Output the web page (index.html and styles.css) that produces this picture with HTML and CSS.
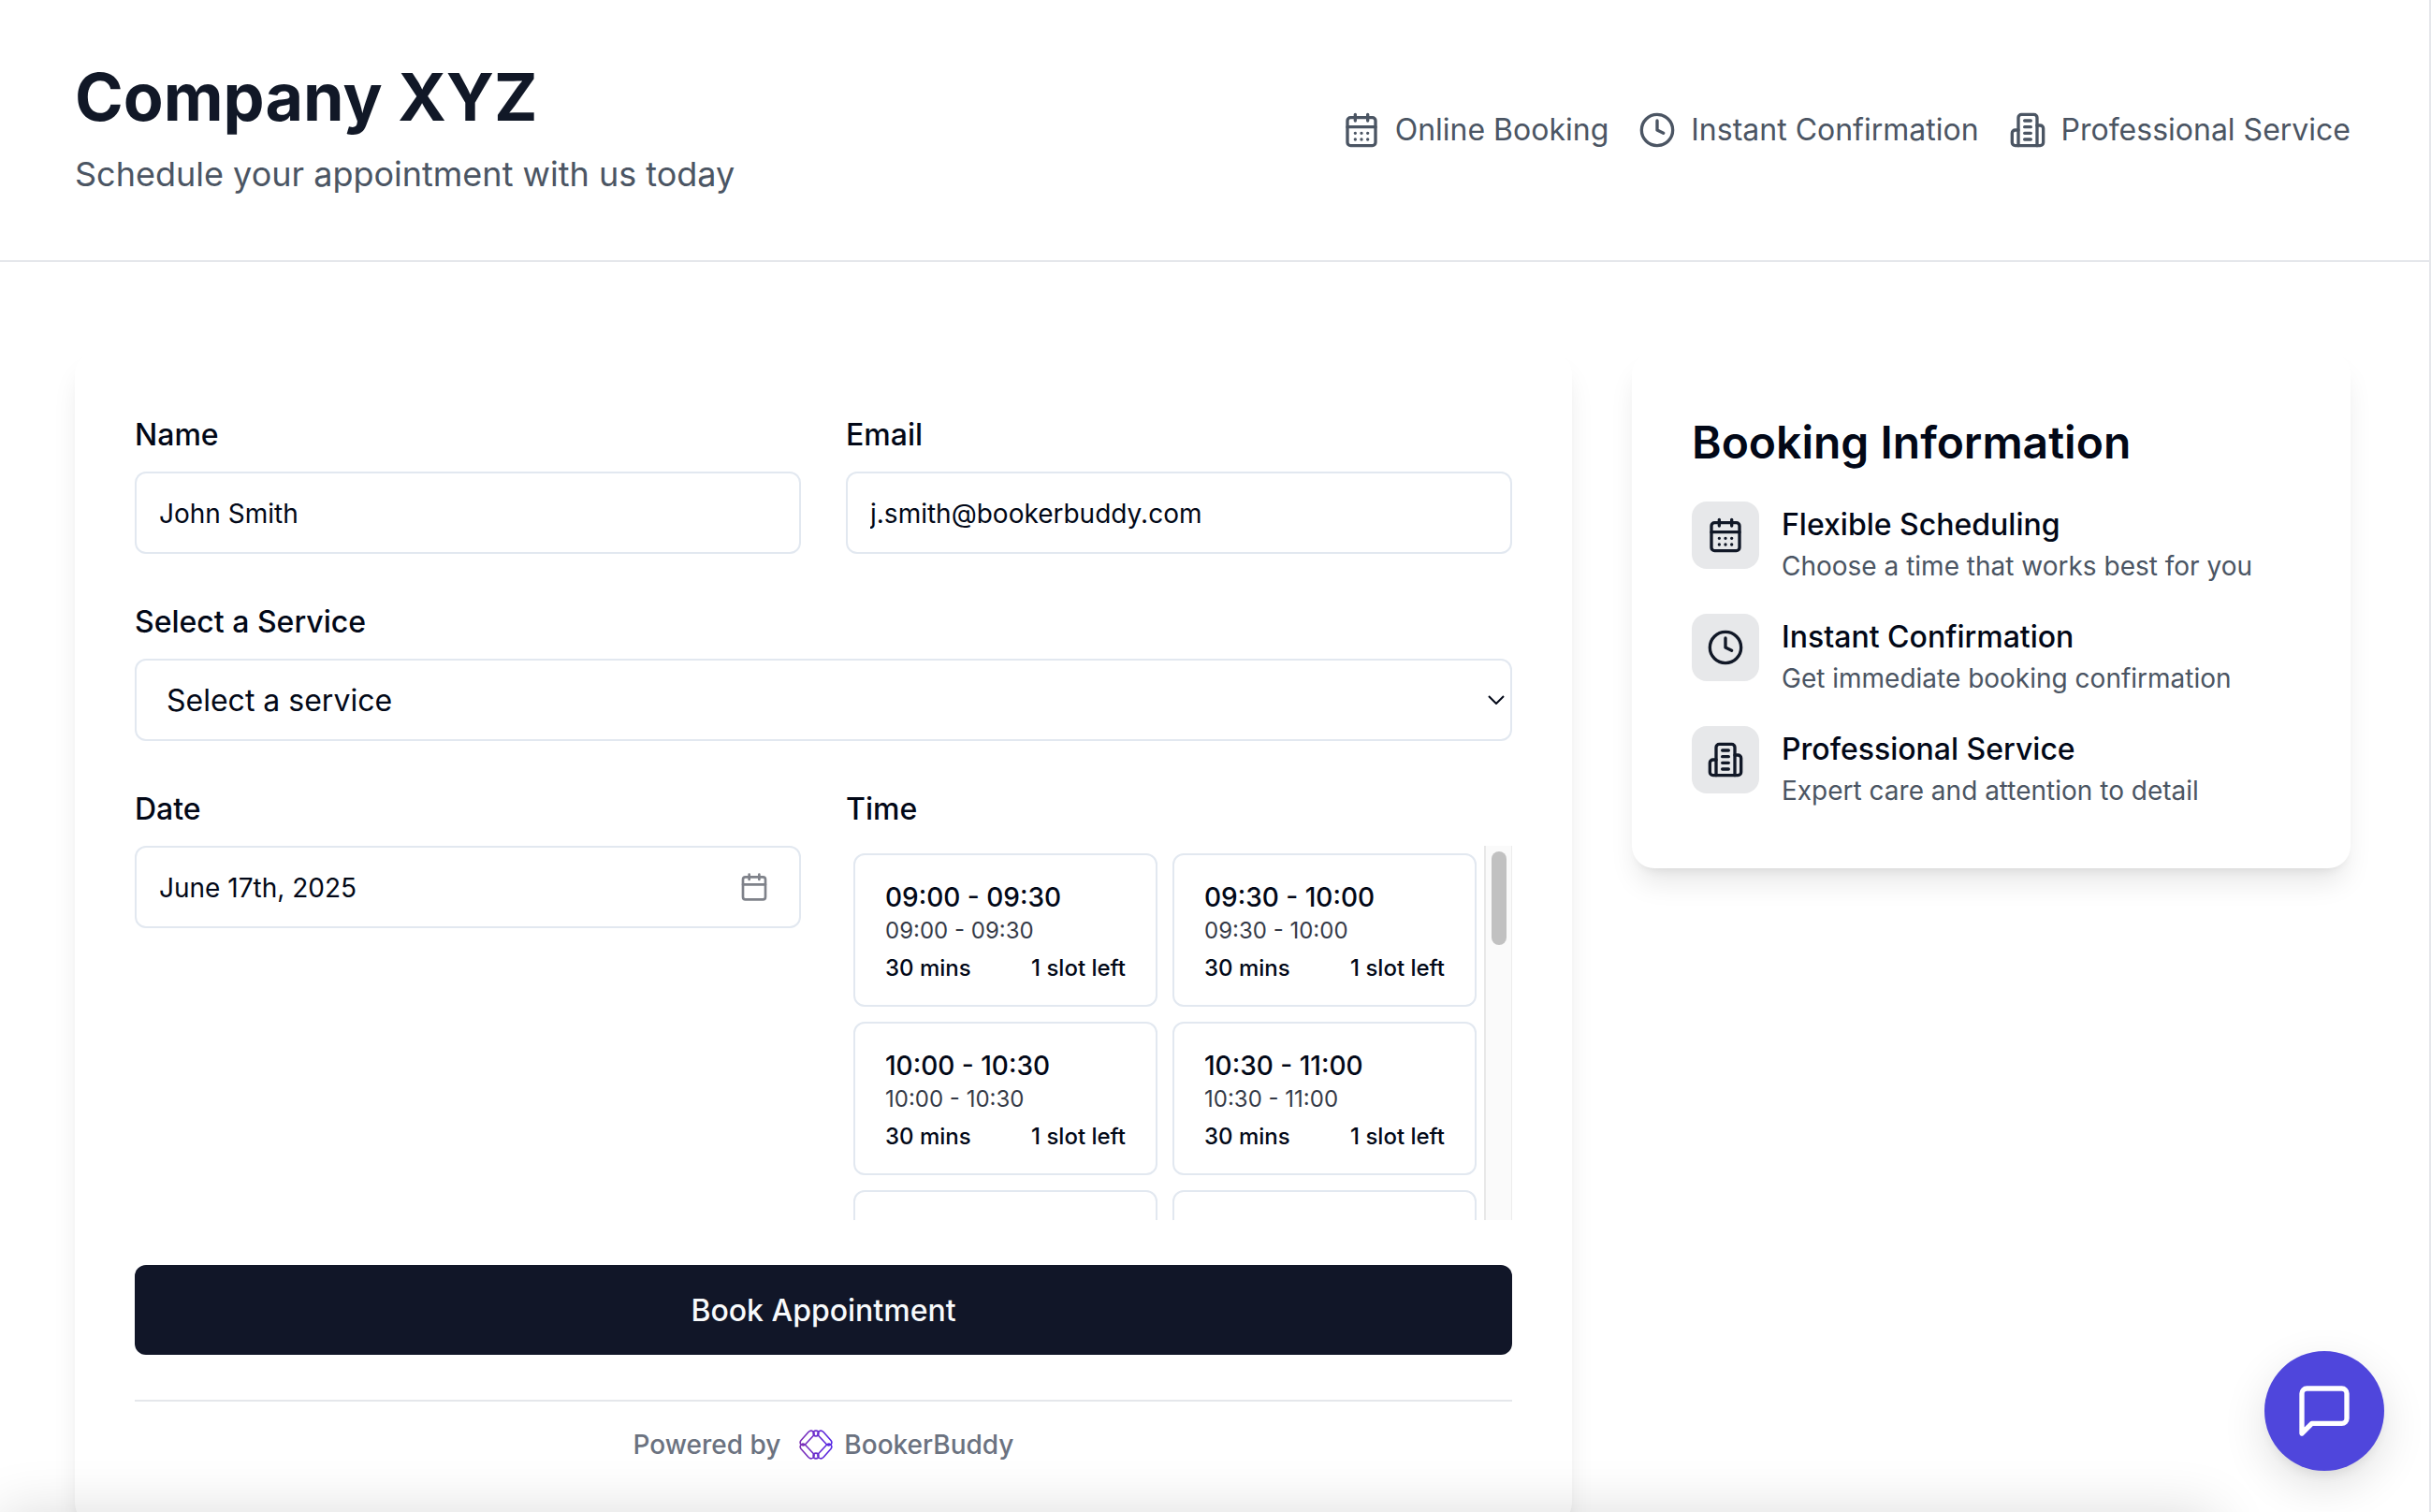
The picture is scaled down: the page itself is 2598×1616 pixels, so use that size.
FILE: index.html
```html
<!DOCTYPE html>
<html lang="en">
<head>
<meta charset="utf-8">
<meta name="viewport" content="width=device-width, initial-scale=1">
<title>Company XYZ</title>
<link rel="stylesheet" href="styles.css">
</head>
<body>
<svg class="sprite" aria-hidden="true">
  <symbol id="calendar-days" viewBox="0 0 24 24"><path d="M8 2v4M16 2v4M3 10h18M8 14h.01M12 14h.01M16 14h.01M8 18h.01M12 18h.01M16 18h.01"/><rect x="3" y="4" width="18" height="18" rx="2"/></symbol>
  <symbol id="calendar" viewBox="0 0 24 24"><path d="M8 2v4M16 2v4M3 10h18"/><rect x="3" y="4" width="18" height="18" rx="2"/></symbol>
  <symbol id="clock" viewBox="0 0 24 24"><circle cx="12" cy="12" r="10"/><path d="M12 6v6l4 2"/></symbol>
  <symbol id="building" viewBox="0 0 24 24"><path d="M6 22V4a2 2 0 0 1 2-2h8a2 2 0 0 1 2 2v18Z"/><path d="M6 12H4a2 2 0 0 0-2 2v6a2 2 0 0 0 2 2h2M18 9h2a2 2 0 0 1 2 2v9a2 2 0 0 1-2 2h-2M10 6h4M10 10h4M10 14h4M10 18h4"/></symbol>
</svg>
<div class="page">
  <header class="header">
    <div>
      <h1 class="title">Company XYZ</h1>
      <p class="tagline">Schedule your appointment with us today</p>
    </div>
    <ul class="features">
      <li class="feature"><svg class="icon"><use href="#calendar-days"/></svg>Online Booking</li>
      <li class="feature"><svg class="icon"><use href="#clock"/></svg>Instant Confirmation</li>
      <li class="feature"><svg class="icon"><use href="#building"/></svg>Professional Service</li>
    </ul>
  </header>

  <main class="main">
    <section class="card booking">
      <form class="form">
        <div class="row">
          <div class="field">
            <label class="label" for="name">Name</label>
            <input class="control" id="name" type="text" value="John Smith">
          </div>
          <div class="field">
            <label class="label" for="email">Email</label>
            <input class="control" id="email" type="email" value="j.smith@bookerbuddy.com">
          </div>
        </div>
        <div class="field">
          <label class="label" for="service">Select a Service</label>
          <div class="control-wrap">
            <select class="control select" id="service"><option>Select a service</option></select>
            <svg class="chevron" viewBox="0 0 18 10" aria-hidden="true"><path d="M1 1l8 8 8-8"/></svg>
          </div>
        </div>
        <div class="row">
          <div class="field">
            <label class="label" for="date">Date</label>
            <div class="control-wrap">
              <input class="control" id="date" type="text" value="June 17th, 2025">
              <svg class="icon date-icon" aria-hidden="true"><use href="#calendar"/></svg>
            </div>
          </div>
          <div class="field">
            <span class="label" id="time-label">Time</span>
            <div class="slots" role="group" aria-labelledby="time-label">
              <div class="slot-grid">
                <button class="slot" type="button"><span class="slot-title">09:00 - 09:30</span><span class="slot-range">09:00 - 09:30</span><span class="slot-meta"><span>30 mins</span><span>1 slot left</span></span></button>
                <button class="slot" type="button"><span class="slot-title">09:30 - 10:00</span><span class="slot-range">09:30 - 10:00</span><span class="slot-meta"><span>30 mins</span><span>1 slot left</span></span></button>
                <button class="slot" type="button"><span class="slot-title">10:00 - 10:30</span><span class="slot-range">10:00 - 10:30</span><span class="slot-meta"><span>30 mins</span><span>1 slot left</span></span></button>
                <button class="slot" type="button"><span class="slot-title">10:30 - 11:00</span><span class="slot-range">10:30 - 11:00</span><span class="slot-meta"><span>30 mins</span><span>1 slot left</span></span></button>
                <button class="slot" type="button"></button>
                <button class="slot" type="button"></button>
              </div>
              <div class="scrollbar"><div class="thumb"></div></div>
            </div>
          </div>
        </div>
        <button class="submit" type="submit">Book Appointment</button>
      </form>
      <footer class="powered">
        <span>Powered by</span>
        <a class="brand" href="#">
          <svg class="logo" viewBox="0 0 36 32" aria-hidden="true">
            <defs><linearGradient id="brand-fill" gradientUnits="userSpaceOnUse" x1="0" y1="0" x2="36" y2="0"><stop offset="0" stop-color="#7e2fb4"/><stop offset="1" stop-color="#5528e6"/></linearGradient></defs>
            <g fill="none" stroke="url(#brand-fill)" stroke-width="1.6" stroke-linejoin="round">
              <path d="M2 11.500L10 2.500Q12.500 0 15 2Q17.200 4.400 15 6.800L6.800 15.500Q4.500 18 2.200 16Q.2 13.800 2 11.500Z"/>
              <path d="M34 11.500L26 2.500Q23.500 0 21 2Q18.800 4.400 21 6.800L29.200 15.500Q31.500 18 33.800 16Q35.800 13.800 34 11.500Z"/>
              <path d="M2 20.500L10 29.500Q12.500 32 15 30Q17.200 27.600 15 25.200L6.800 16.500Q4.500 14 2.200 16Q.2 18.200 2 20.500Z"/>
              <path d="M34 20.500L26 29.500Q23.500 32 21 30Q18.800 27.600 21 25.200L29.200 16.500Q31.500 14 33.800 16Q35.800 18.200 34 20.500Z"/>
              <circle cx="18" cy="4" r="2.900"/>
              <circle cx="18" cy="28" r="2.900"/>
            </g>
          </svg>
          BookerBuddy
        </a>
      </footer>
    </section>

    <aside class="card info">
      <h2 class="info-title">Booking Information</h2>
      <ul class="info-list">
        <li class="info-item"><span class="badge"><svg class="icon"><use href="#calendar-days"/></svg></span><div class="info-text"><h3 class="info-name">Flexible Scheduling</h3><p class="info-desc">Choose a time that works best for you</p></div></li>
        <li class="info-item"><span class="badge"><svg class="icon"><use href="#clock"/></svg></span><div class="info-text"><h3 class="info-name">Instant Confirmation</h3><p class="info-desc">Get immediate booking confirmation</p></div></li>
        <li class="info-item"><span class="badge"><svg class="icon"><use href="#building"/></svg></span><div class="info-text"><h3 class="info-name">Professional Service</h3><p class="info-desc">Expert care and attention to detail</p></div></li>
      </ul>
    </aside>
  </main>
</div>
<div class="bottom-shade"></div>
<button class="chat" type="button" aria-label="Open chat"><svg class="icon chat-icon" viewBox="0 0 24 24"><path d="M21 15a2 2 0 0 1-2 2H7l-4 4V5a2 2 0 0 1 2-2h14a2 2 0 0 1 2 2z"/></svg></button>
</body>
</html>
```
FILE: styles.css
```css
*, *::before, *::after { box-sizing: border-box; }

body {
  margin: 0;
  height: 100vh;
  overflow: hidden;
  background: #fff;
  color: #020817;
  font-family: Inter, "Liberation Sans", sans-serif;
  font-size: 32px;
  line-height: 48px;
}

h1, h2, h3, p, ul { margin: 0; padding: 0; }
ul { list-style: none; }
button, input, select { font: inherit; color: inherit; }

.sprite { display: none; }

.icon {
  width: 40px;
  height: 40px;
  flex: none;
  fill: none;
  stroke: currentColor;
  stroke-width: 2;
  stroke-linecap: round;
  stroke-linejoin: round;
}

.page {
  min-height: 100vh;
  border-right: 2px solid #e5e7eb;
}

/* Header */
.header {
  display: flex;
  align-items: center;
  justify-content: space-between;
  padding: 64px 84px 64px 80px;
  border-bottom: 2px solid #e5e7eb;
}

.title {
  color: #111827;
  font-size: 70px;
  font-weight: 700;
  line-height: 80px;
}

.tagline {
  margin-top: 14px;
  color: #4b5563;
  font-size: 36px;
  line-height: 56px;
}

.features { display: flex; gap: 32px; color: #4b5563; }
.feature { display: flex; align-items: center; gap: 16px; }

/* Content */
.main {
  display: grid;
  grid-template-columns: repeat(3, minmax(0, 1fr));
  gap: 64px;
  align-items: start;
  padding: 96px 84px 96px 80px;
}

.card {
  padding: 64px;
  border-radius: 24px;
  background: #fff;
  box-shadow: 0 20px 30px -6px rgba(0, 0, 0, .1), 0 8px 12px -8px rgba(0, 0, 0, .1);
}

.booking { grid-column: span 2; }
.form { display: flex; flex-direction: column; gap: 48px; }
.row { display: grid; grid-template-columns: repeat(2, minmax(0, 1fr)); gap: 48px; }
.field { display: flex; flex-direction: column; gap: 14px; }
.label { font-weight: 500; line-height: 50px; }

.control {
  display: block;
  width: 100%;
  height: 88px;
  padding: 2px 24px 0;
  border: 2px solid #e2e8f0;
  border-radius: 12px;
  background: #fff;
  font-size: 28px;
}

.control-wrap { position: relative; }
.select { padding: 2px 32px 0; font-size: 32px; appearance: none; }

.chevron {
  position: absolute;
  top: 39px;
  right: 8px;
  width: 18px;
  height: 10px;
  fill: none;
  stroke: #020817;
  stroke-width: 2;
  pointer-events: none;
}

.date-icon {
  position: absolute;
  top: 28px;
  right: 34px;
  width: 32px;
  height: 32px;
  opacity: .5;
  pointer-events: none;
}

/* Time slots */
.slots { display: flex; height: 400px; overflow: hidden; }

.slot-grid {
  flex: 1;
  display: grid;
  grid-template-columns: repeat(2, minmax(0, 1fr));
  grid-auto-rows: 164px;
  gap: 16px;
  padding: 8px;
}

.slot {
  display: flex;
  flex-direction: column;
  padding: 25px 32px 23px;
  border: 2px solid #e2e8f0;
  border-radius: 12px;
  background: #fff;
  text-align: left;
  font-size: 24px;
  line-height: 32px;
}

.slot-title { font-size: 28px; font-weight: 500; line-height: 40px; }
.slot-range { opacity: .8; }
.slot-meta { display: flex; justify-content: space-between; margin-top: 8px; font-weight: 500; }

.scrollbar {
  width: 30px;
  padding: 6px;
  border-left: 2px solid #e8e8e8;
  border-right: 1px solid #ededed;
  background: #fafafa;
}

.thumb { width: 16px; height: 100px; border-radius: 8px; background: #c1c1c1; }

.submit {
  height: 96px;
  padding: 2px 0 0;
  border: 0;
  border-radius: 12px;
  background: #111628;
  color: #f8fafc;
  font-weight: 500;
}

.powered {
  display: flex;
  justify-content: center;
  gap: 20px;
  margin-top: 48px;
  padding-top: 24px;
  border-top: 2px solid #e5e7eb;
  color: #6b7280;
  font-size: 28px;
  font-weight: 500;
  line-height: 44px;
}

.brand { display: flex; align-items: center; gap: 12px; color: inherit; text-decoration: none; }
.logo { width: 36px; height: 32px; }

/* Booking information */
.info-title { font-size: 48px; font-weight: 600; line-height: 66px; }
.info-list { display: flex; flex-direction: column; gap: 32px; margin-top: 30px; }
.info-item { display: flex; align-items: flex-start; gap: 24px; }

.badge {
  display: flex;
  padding: 16px;
  border-radius: 16px;
  background: #e7e8ea;
  color: #111827;
}

.info-name { font-size: 32px; font-weight: 500; line-height: 50px; }
.info-desc { color: #4b5563; font-size: 28px; line-height: 38px; }

/* Overlays */
.bottom-shade {
  position: fixed;
  right: 230px;
  bottom: -160px;
  left: 0;
  height: 160px;
  box-shadow: 0 0 60px rgba(0, 0, 0, .14);
  pointer-events: none;
}

.chat {
  position: fixed;
  right: 50px;
  bottom: 44px;
  display: grid;
  place-items: center;
  width: 128px;
  height: 128px;
  padding: 0;
  border: 0;
  border-radius: 50%;
  background: #4f46dc;
  color: #fff;
  box-shadow: 0 16px 48px rgba(0, 0, 0, .12), 0 8px 16px -6px rgba(0, 0, 0, .1);
}

.chat-icon { width: 64px; height: 64px; }
```
